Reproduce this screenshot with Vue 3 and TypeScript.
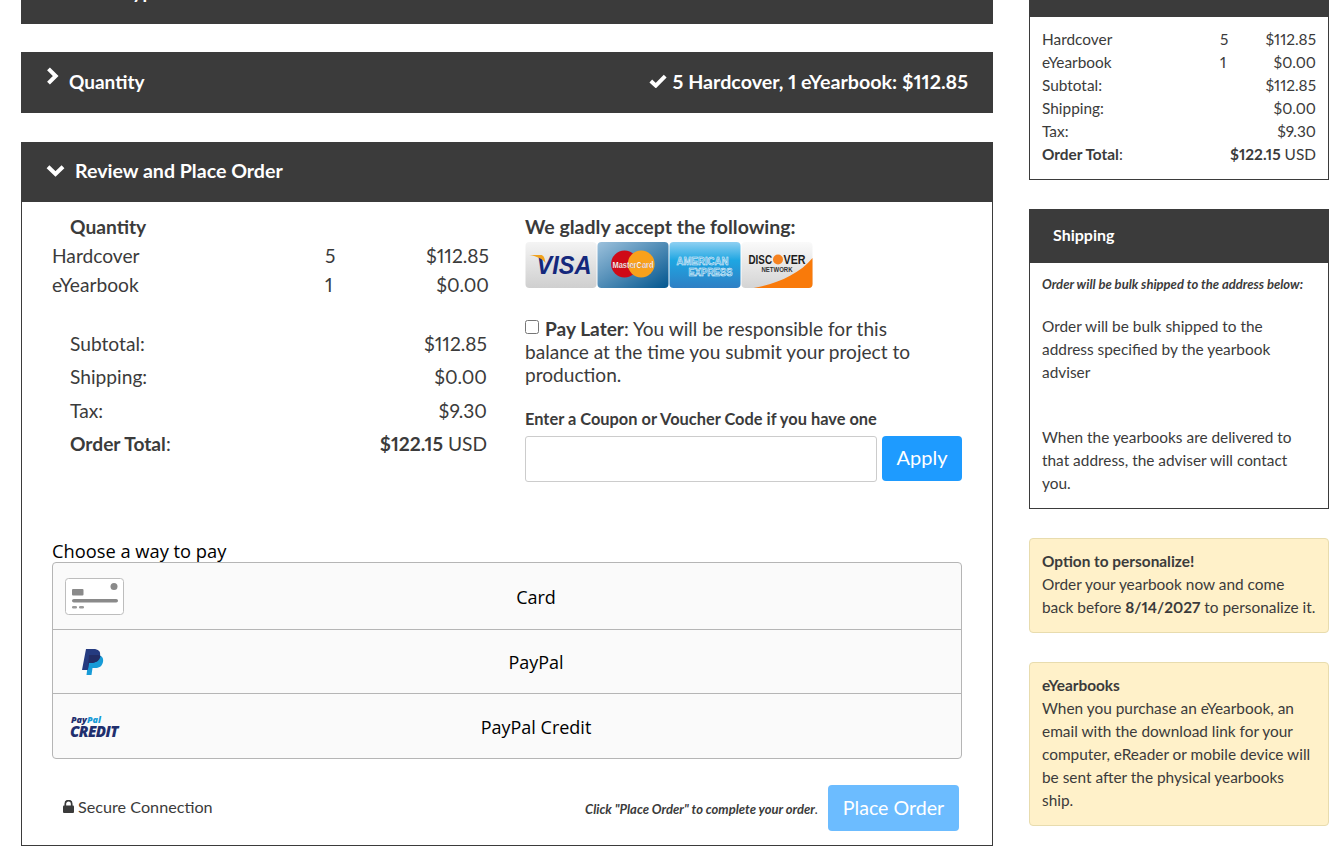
<script setup lang="ts">
const sideRows = [
  { label: 'Hardcover', qty: '5', price: '$112.85' },
  { label: 'eYearbook', qty: '1', price: '$0.00' },
  { label: 'Subtotal:', qty: '', price: '$112.85' },
  { label: 'Shipping:', qty: '', price: '$0.00' },
  { label: 'Tax:', qty: '', price: '$9.30' },
]
const items = [
  { label: 'Hardcover', qty: '5', price: '$112.85' },
  { label: 'eYearbook', qty: '1', price: '$0.00' },
]
const totals = [
  { label: 'Subtotal:', price: '$112.85' },
  { label: 'Shipping:', price: '$0.00' },
  { label: 'Tax:', price: '$9.30' },
]
</script>

<template>
  <div class="page">
    <main class="main">
      <section class="bar bar-cut"><span class="bar-title cut-title">Cover Type</span></section>

      <section class="bar bar-qty">
        <svg class="chev-right" viewBox="0 0 13 18" width="13" height="18"><path d="M2.5 1.8 L9.700 9 L2.500 16.200" fill="none" stroke="#fff" stroke-width="4" /></svg>
        <span class="bar-title">Quantity</span>
        <span class="bar-summary">
          <svg viewBox="0 0 18 14" width="18" height="14"><path d="M1.800 7 L6.800 11.600 L16.200 2.200" fill="none" stroke="#fff" stroke-width="4" /></svg>
          <span>5 Hardcover, 1 eYearbook: $112.85</span>
        </span>
      </section>

      <section class="review">
        <header class="bar bar-review">
          <svg class="chev-down" viewBox="0 0 19 13" width="19" height="13"><path d="M2 2.800 L9.500 10 L17 2.800" fill="none" stroke="#fff" stroke-width="4" /></svg>
          <span class="bar-title review-title">Review and Place Order</span>
        </header>
        <div class="panel">
          <div class="columns">
            <div class="left">
              <div class="qty-head">Quantity</div>
              <div v-for="i in items" :key="i.label" class="item">
                <span class="item-label">{{ i.label }}</span>
                <span class="item-qty">{{ i.qty }}</span>
                <span class="item-price">{{ i.price }}</span>
              </div>
              <div class="totals">
                <div v-for="t in totals" :key="t.label" class="total">
                  <span>{{ t.label }}</span><span>{{ t.price }}</span>
                </div>
                <div class="total">
                  <span><b>Order Total</b>:</span><span><b>$122.15</b> USD</span>
                </div>
              </div>
            </div>
            <div class="right">
              <div class="accept">We gladly accept the following:</div>
              <div class="cards">
                <svg class="card" viewBox="0 0 71 46" width="72" height="46">
                  <defs>
                    <linearGradient id="gv" x1="0" y1="0" x2="0" y2="1"><stop offset="0" stop-color="#f4f4f4" /><stop offset="1" stop-color="#cfcfcf" /></linearGradient>
                    <linearGradient id="gm" x1="0" y1="0" x2="1" y2="1"><stop offset="0" stop-color="#9cc1dc" /><stop offset="1" stop-color="#02568f" /></linearGradient>
                    <linearGradient id="ga" x1="0" y1="0" x2="0" y2="1"><stop offset="0" stop-color="#8fd0f2" /><stop offset=".4" stop-color="#1ea6e2" /><stop offset="1" stop-color="#2f7fc4" /></linearGradient>
                    <linearGradient id="gd" x1="0" y1="0" x2="0" y2="1"><stop offset="0" stop-color="#fafafa" /><stop offset="1" stop-color="#d4d4d4" /></linearGradient>
                  </defs>
                  <rect width="71" height="46" rx="4" fill="url(#gv)" />
                  <text x="11" y="32" textLength="55" lengthAdjust="spacingAndGlyphs" class="visa">VISA</text>
                  <path d="M4 13 H15 C18 13 19 15 20 21 C17 17 12 14.500 4 13Z" fill="#f0a21e" />
                </svg>
                <svg class="card" viewBox="0 0 71 46" width="72" height="46">
                  <rect width="71" height="46" rx="4" fill="url(#gm)" />
                  <circle cx="27" cy="22" r="13.400" fill="#cf0a17" />
                  <circle cx="43.700" cy="22" r="13.400" fill="#f9a11b" />
                  <text x="35.500" y="25.500" text-anchor="middle" textLength="41" lengthAdjust="spacingAndGlyphs" class="mc">MasterCard</text>
                </svg>
                <svg class="card" viewBox="0 0 71 46" width="72" height="46">
                  <rect width="71" height="46" rx="4" fill="url(#ga)" />
                  <text x="7" y="22.500" textLength="52" lengthAdjust="spacingAndGlyphs" class="amex">AMERICAN</text>
                  <text x="19" y="33.500" textLength="44" lengthAdjust="spacingAndGlyphs" class="amex">EXPRESS</text>
                </svg>
                <svg class="card" viewBox="0 0 71 46" width="72" height="46">
                  <rect width="71" height="46" rx="4" fill="url(#gd)" />
                  <path d="M12 46 C35 42 58 32 71 16 L71 42 Q71 46 67 46Z" fill="#f97a0a" />
                  <text x="7" y="22" textLength="23.500" lengthAdjust="spacingAndGlyphs" class="disc">DISC</text>
                  <circle cx="36.500" cy="17.500" r="5" fill="#f58220" />
                  <text x="42" y="22" textLength="22" lengthAdjust="spacingAndGlyphs" class="disc">VER</text>
                  <text x="20" y="30" textLength="31" lengthAdjust="spacingAndGlyphs" class="net">NETWORK</text>
                </svg>
              </div>
              <p class="later">
                <input type="checkbox" class="check" />
                <b>Pay Later</b>: You will be responsible for this balance at the time you submit your project to production.
              </p>
              <div class="coupon-label">Enter a Coupon or Voucher Code if you have one</div>
              <div class="coupon">
                <input type="text" class="coupon-input" />
                <button class="apply">Apply</button>
              </div>
            </div>
          </div>

          <div class="choose">Choose a way to pay</div>
          <div class="methods">
            <div class="method m1">
              <svg class="m-icon card-icon" viewBox="0 0 59 37" width="59" height="37">
                <rect x=".5" y=".5" width="58" height="36" rx="3" fill="#fff" stroke="#bdbdbd" />
                <circle cx="49" cy="8.500" r="3.500" fill="#8a8a8a" />
                <rect x="7" y="11" width="11.500" height="6.500" rx="1" fill="#8a8a8a" />
                <rect x="7" y="21" width="46" height="3.600" rx="1.800" fill="#8a8a8a" />
                <rect x="7" y="28" width="5" height="2.600" rx="1.300" fill="#9a9a9a" />
                <rect x="14" y="28" width="5" height="2.600" rx="1.300" fill="#9a9a9a" />
              </svg>
              <span>Card</span>
            </div>
            <div class="method m2">
              <svg class="m-icon pp-icon" viewBox="0 0 24 28" width="24" height="28">
                <path d="M8 7 H16 C20 7 23 9.500 22 14 C21 18.500 18 20 14 20 H11.500 L10.500 27 H5.500Z" fill="#179bd7" />
                <path d="M5 1 H12.500 C17 1 20 3 19 8 C18 13 14.500 15 10 15 H8 L6.800 22 H1Z" fill="#253b80" />
                <path d="M8 7 H16 C17.800 7 19 7.400 19.600 8 C18.500 13 14.500 15 10 15 H8 L6.900 21.500 Z" fill="#222d65" />
              </svg>
              <span>PayPal</span>
            </div>
            <div class="method m3">
              <div class="m-icon ppc"><span class="ppc-top"><i>Pay</i><i class="ppc-pal">Pal</i></span><span class="ppc-main">CREDIT</span></div>
              <span>PayPal Credit</span>
            </div>
          </div>

          <div class="foot">
            <span class="secure">
              <svg viewBox="0 0 11 13" width="11" height="13"><path d="M2.300 6 V3.800 A3.200 3.200 0 0 1 8.700 3.800 V6" fill="none" stroke="#3b3b3b" stroke-width="1.700" /><rect y="5.500" width="11" height="7.500" rx="1" fill="#3b3b3b" /></svg>
              <span>Secure Connection</span>
            </span>
            <span class="foot-right">
              <span class="click"><b>Click "Place Order" to complete your order</b>.</span>
              <button class="place">Place Order</button>
            </span>
          </div>
        </div>
      </section>
    </main>

    <aside class="side">
      <section class="box box-order">
        <div class="box-top"></div>
        <div class="box-body order-body">
          <div v-for="r in sideRows" :key="r.label" class="s-row">
            <span class="s-label">{{ r.label }}</span>
            <span class="s-qty">{{ r.qty }}</span>
            <span class="s-price">{{ r.price }}</span>
          </div>
          <div class="s-total"><span><b>Order Total</b>:</span><span><b>$122.15</b> USD</span></div>
        </div>
      </section>

      <section class="box box-ship">
        <div class="ship-head">Shipping</div>
        <div class="box-body ship-body">
          <div class="ship-note">Order will be bulk shipped to the address below:</div>
          <p class="ship-p">Order will be bulk shipped to the address specified by the yearbook adviser</p>
          <p class="ship-p ship-p2">When the yearbooks are delivered to that address, the adviser will contact you.</p>
        </div>
      </section>

      <section class="note">
        <b>Option to personalize!</b><br />
        Order your yearbook now and come back before <b>8/14/2027</b> to personalize it.
      </section>
      <section class="note">
        <b>eYearbooks</b><br />
        When you purchase an eYearbook, an email with the download link for your computer, eReader or mobile device will be sent after the physical yearbooks ship.
      </section>
    </aside>
  </div>
</template>

<style>
html, body { margin: 0; background: #fff; overflow: hidden; }
</style>

<style scoped>
.page {
  height: 854px;
  overflow: hidden;
  display: flex;
  align-items: flex-start;
  padding-left: 21px;
  gap: 36px;
  font-family: Lato, "Liberation Sans", sans-serif;
  font-variant-numeric: proportional-nums;
  color: #3b3b3b;
  box-sizing: border-box;
}
b { font-weight: 700; }
.main { width: 972px; flex: none; }
.bar {
  background: #3b3b3b;
  color: #fff;
  display: flex;
  align-items: center;
  box-sizing: border-box;
}
.bar-title { font-size: 19px; font-weight: 700; }
.review-title { font-size: 19.600px; }
.bar-cut { height: 24px; align-items: flex-start; overflow: hidden; padding-left: 48px; margin-bottom: 28px; }
.cut-title { margin-top: -19px; line-height: 22px; }
.bar-qty { height: 61px; padding: 0 25px 3px; margin-bottom: 29px; }
.chev-right { margin-right: 10px; margin-top: -10px; }
.bar-summary { margin-left: auto; display: flex; align-items: center; gap: 6px; font-size: 19.700px; font-weight: 700; }
.review { display: block; }
.bar-review { height: 60px; padding: 0 25px 4px; }
.chev-down { margin-right: 10px; }
.panel {
  border: 1px solid #3b3b3b;
  border-top: 0;
  height: 644px;
  box-sizing: border-box;
  padding: 0 30px;
}
.columns { display: flex; height: 332px; }
.left { width: 437px; flex: none; font-size: 19.200px; }
.qty-head { font-weight: 700; padding-left: 18px; line-height: 29px; margin-top: 10px; }
.item { display: flex; line-height: 29px; }
.item-label { width: 273px; }
.item-qty { width: 30px; }
.item-price { flex: 1; text-align: right; }
.totals { margin-top: 28px; padding-left: 18px; padding-right: 2px; }
.total { display: flex; justify-content: space-between; line-height: 33.300px; }
.right { margin-left: 36px; width: 437px; flex: none; }
.accept { font-size: 19.500px; font-weight: 700; line-height: 24px; margin-top: 13px; }
.cards { display: flex; margin-top: 3px; height: 46px; width: 288px; }
.card { display: block; flex: none; }
.visa { font: italic 700 26px "Liberation Sans", sans-serif; fill: #14287c; }
.mc { font: 700 9.500px "Liberation Sans", sans-serif; fill: #fff; stroke: #8a2a20; stroke-width: .15px; }
.amex { font: 700 11px "Liberation Sans", sans-serif; fill: #4aa9de; stroke: #eaf7fe; stroke-width: .55px; }
.disc { font: 700 12.500px "Liberation Sans", sans-serif; fill: #1c1c1c; }
.net { font: 700 6.500px "Liberation Sans", sans-serif; fill: #333; }
.later { font-size: 19.100px; line-height: 23px; margin: 29px 0 0; padding-right: 16px; }
.check { margin: 0 6px 0 0; width: 14px; height: 14px; vertical-align: 2px; }
.coupon-label { font-size: 16.400px; font-weight: 700; line-height: 20px; margin-top: 23px; }
.coupon { display: flex; gap: 5px; margin-top: 7px; align-items: flex-start; }
.coupon-input { width: 352px; height: 46px; box-sizing: border-box; border: 1px solid #ccc; border-radius: 3px; background: #fff; }
.apply {
  width: 80px; height: 45px; border: 0; border-radius: 4px; padding: 0 0 4px;
  background: #1e9bff; color: #fff; font: 400 20px Lato, sans-serif;
}
.choose { font-family: "Open Sans", sans-serif; font-size: 18.300px; color: #000; line-height: 24px; margin-top: 5px; }
.methods { border: 1px solid #b5b5b5; border-radius: 4px; background: #fafafa; margin-top: -1px; width: 910px; box-sizing: border-box; }
.method {
  display: flex; align-items: center; justify-content: center;
  padding-left: 58px;
  font-family: "Open Sans", sans-serif; font-size: 18px; color: #000;
  position: relative; box-sizing: border-box;
}
.m1 { height: 67px; border-bottom: 1px solid #b5b5b5; padding-top: 2px; }
.m2 { height: 64px; border-bottom: 1px solid #b5b5b5; }
.m3 { height: 64px; padding-top: 2px; }
.m-icon { position: absolute; }
.card-icon { left: 12px; top: 15px; }
.pp-icon { left: 28px; top: 18px; }
.ppc { left: 17px; top: 21px; display: flex; flex-direction: column; font-family: "Open Sans", sans-serif; font-style: italic; font-weight: 800; color: #1f2f6e; }
.ppc-top { font-size: 9px; line-height: 9px; padding-left: 1px; }
.ppc-top i { font-style: italic; }
.ppc-pal { color: #179bd7; }
.ppc-main { font-size: 15px; line-height: 15px; letter-spacing: -.6px; }
.foot { display: flex; justify-content: space-between; align-items: center; margin-top: 26px; padding: 0 3px 0 11px; }
.secure { font-size: 16.200px; display: flex; align-items: center; gap: 4px; margin-top: -3px; }
.foot-right { display: flex; align-items: center; gap: 10px; }
.click { font-size: 13px; font-style: italic; padding-top: 1px; }
.place {
  width: 131px; height: 46px; border: 0; border-radius: 4px; padding: 0 0 2px;
  background: #6cbcff; color: #fff; font: 400 19.600px Lato, sans-serif;
}
.side { width: 300px; flex: none; font-size: 15.400px; line-height: 23px; }
.box { border: 1px solid #3b3b3b; border-top: 0; box-sizing: border-box; }
.box-top { height: 17px; background: #3b3b3b; margin: 0 -1px; }
.order-body { padding: 11px 12px 13px; }
.box-order { margin-bottom: 29px; }
.s-row { display: flex; }
.s-label { width: 178px; }
.s-qty { width: 20px; }
.s-price { flex: 1; text-align: right; }
.s-total { display: flex; justify-content: space-between; }
.box-ship { margin-bottom: 29px; }
.ship-head {
  height: 54px; background: #3b3b3b; color: #fff; font-weight: 700; font-size: 16px;
  margin: 0 -1px; padding: 0 0 4px 24px; display: flex; align-items: center; box-sizing: border-box;
}
.ship-body { padding: 12px 12px 13px; }
.ship-note { font-size: 13px; font-style: italic; font-weight: 700; line-height: 18px; margin-bottom: 22px; white-space: nowrap; }
.ship-p { margin: 0; padding-right: 10px; }
.ship-p2 { margin-top: 42px; }
.note {
  background: #fff1c9;
  border: 1px solid #e8dcae;
  border-radius: 4px;
  padding: 11px 12px 13px;
  margin-bottom: 29px;
}
</style>
